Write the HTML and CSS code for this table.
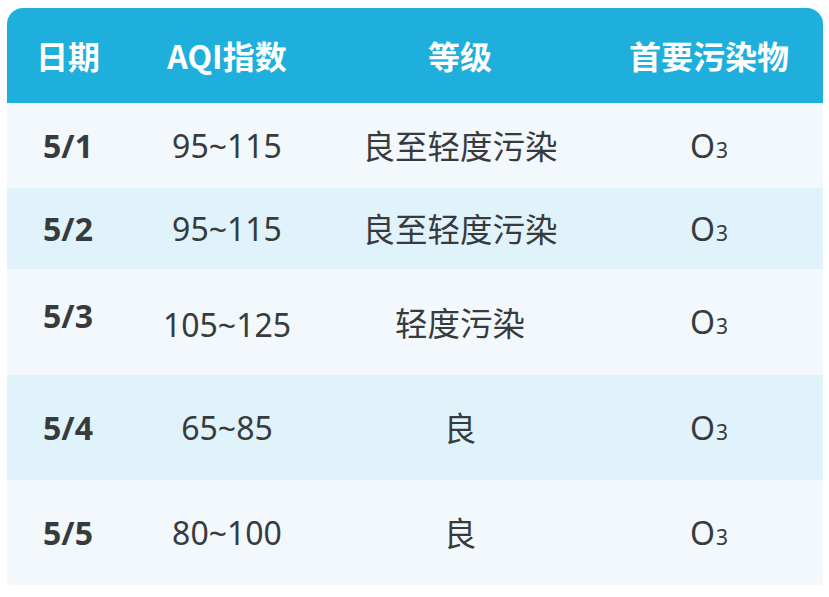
FILE: index.html
```html
<!DOCTYPE html>
<html lang="zh-CN">
<head>
<meta charset="utf-8">
<title>AQI</title>
<link rel="stylesheet" href="styles.css">
</head>
<body>
<div class="table">
  <div class="row head">
    <div class="cell">日期</div>
    <div class="cell">AQI指数</div>
    <div class="cell">等级</div>
    <div class="cell">首要污染物</div>
  </div>
  <div class="row r1 light">
    <div class="cell date">5/1</div>
    <div class="cell num">95~115</div>
    <div class="cell">良至轻度污染</div>
    <div class="cell num"><span>O<span class="sub">3</span></span></div>
  </div>
  <div class="row r2 blue">
    <div class="cell date">5/2</div>
    <div class="cell num">95~115</div>
    <div class="cell">良至轻度污染</div>
    <div class="cell num"><span>O<span class="sub">3</span></span></div>
  </div>
  <div class="row r3 light">
    <div class="cell date raise">5/3</div>
    <div class="cell num lower">105~125</div>
    <div class="cell">轻度污染</div>
    <div class="cell num"><span>O<span class="sub">3</span></span></div>
  </div>
  <div class="row r4 blue">
    <div class="cell date">5/4</div>
    <div class="cell num">65~85</div>
    <div class="cell">良</div>
    <div class="cell num"><span>O<span class="sub">3</span></span></div>
  </div>
  <div class="row r5 light">
    <div class="cell date">5/5</div>
    <div class="cell num">80~100</div>
    <div class="cell">良</div>
    <div class="cell num"><span>O<span class="sub">3</span></span></div>
  </div>
</div>
</body>
</html>
```
FILE: styles.css
```css
html, body {
  margin: 0;
  padding: 0;
  background: #ffffff;
}
body {
  padding: 8px 0 0 7px;
  font-family: "Noto Sans CJK SC", "Noto Sans", sans-serif;
  color: #383b3d;
}
.table {
  width: 816px;
  border-radius: 16px 16px 4px 4px;
  overflow: hidden;
}
.row {
  display: grid;
  grid-template-columns: 122px 196px 270px 228px;
}
.cell {
  display: flex;
  align-items: center;
  justify-content: center;
  font-size: 32.5px;
  font-weight: 400;
  line-height: 1;
}
.num {
  font-family: "Noto Sans", "Noto Sans CJK SC", sans-serif;
  font-size: 32px;
  font-weight: 400;
}
.head {
  height: 95px;
  background: #1fafdc;
  color: #ffffff;
}
.head .cell {
  font-size: 32px;
  font-weight: 700;
  padding-bottom: 2px;
}
.light { background: #f2f8fb; }
.blue { background: #e1f3fa; }
.r1 { height: 85px; }
.r2 { height: 81px; }
.r3 { height: 106px; }
.r4 { height: 105px; }
.r5 { height: 105px; }
.date {
  font-weight: 700;
  font-family: "Noto Sans", "Noto Sans CJK SC", sans-serif;
  font-size: 32px;
}
.raise { padding-bottom: 12px; }
.lower { padding-top: 6px; }
.sub {
  font-size: 21px;
  margin-left: 1px;
}
```
